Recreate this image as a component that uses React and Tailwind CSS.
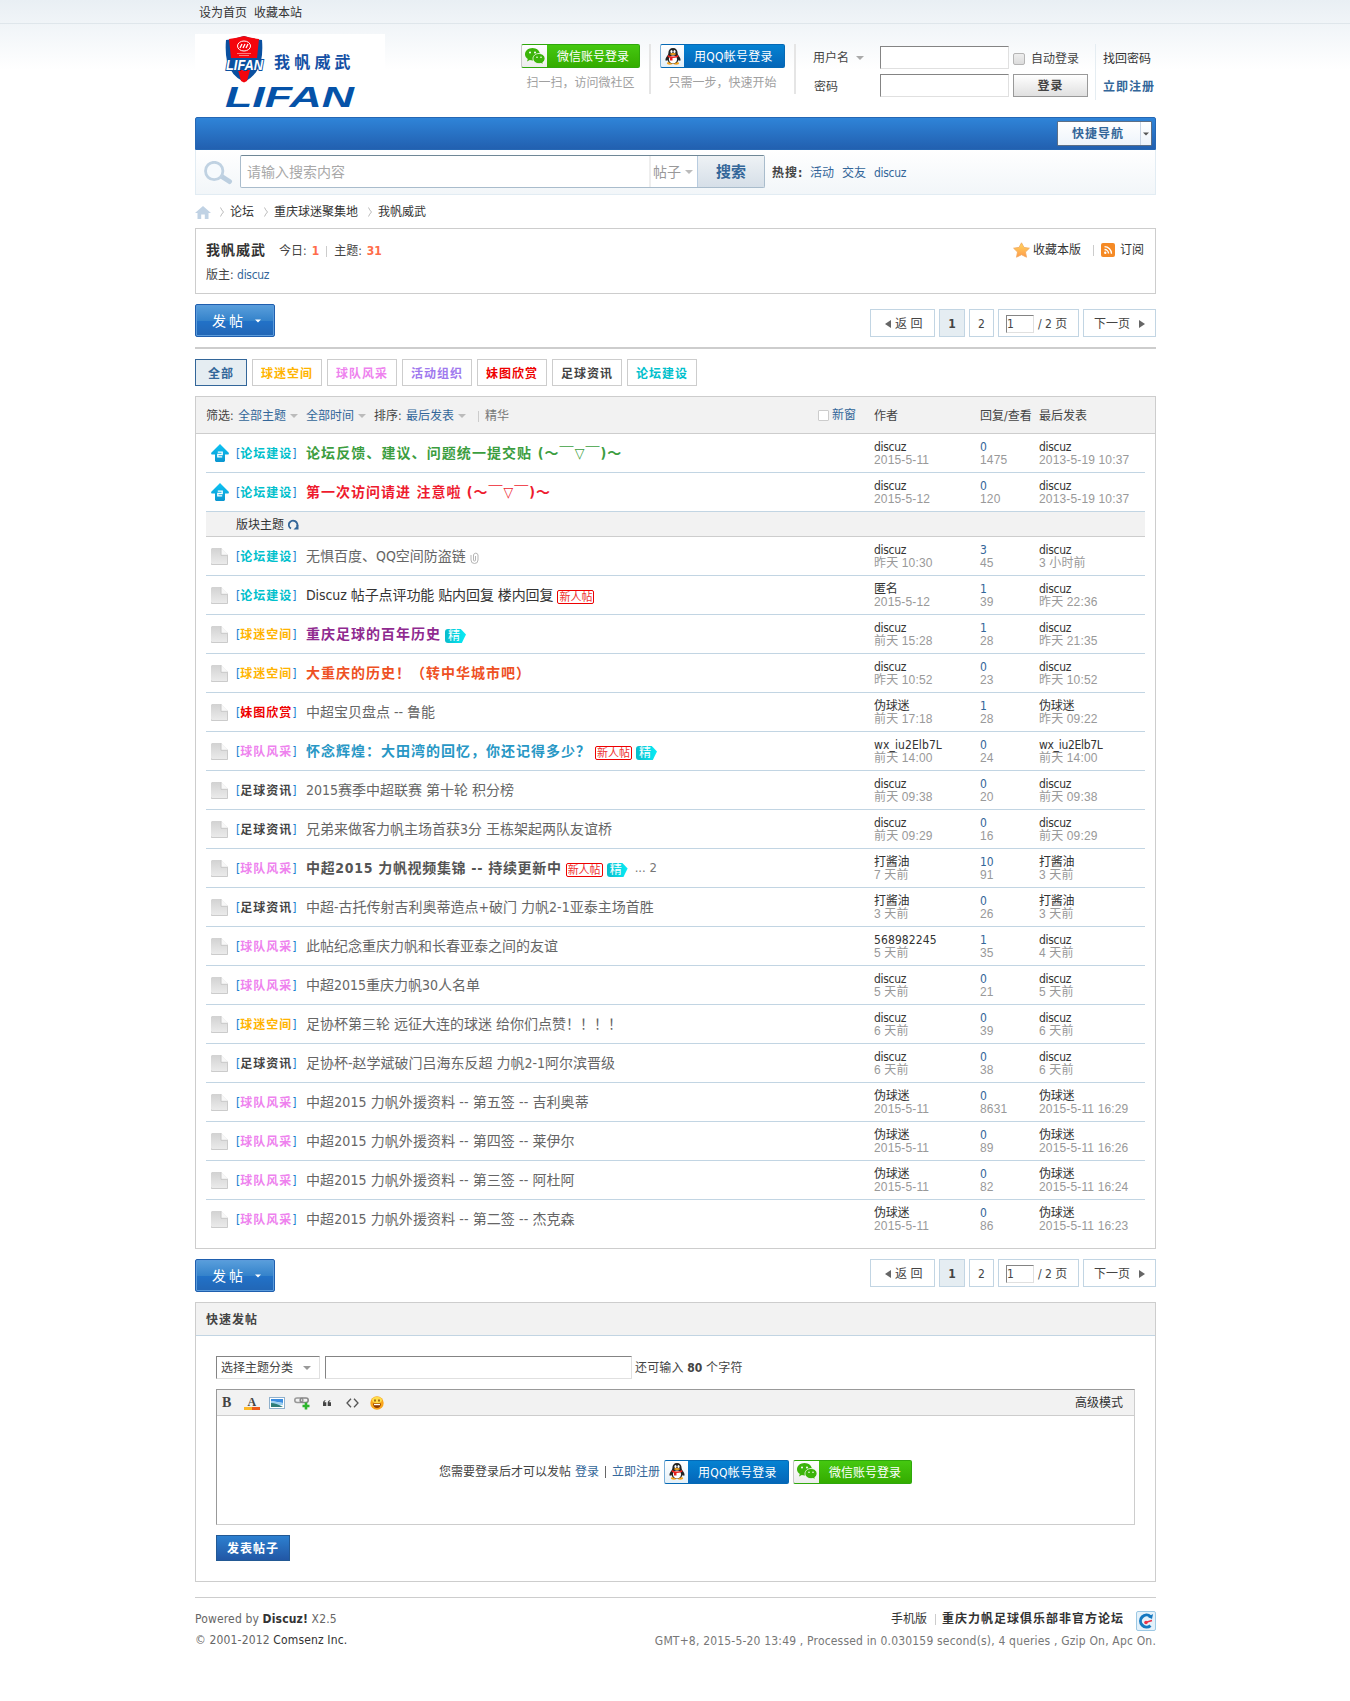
const CN = "font-['DejaVu_Sans_Condensed','Noto_Sans_CJK_SC',sans-serif]";

const CATS = {
  build: ['论坛建设', 'text-[#00c0cc]'],
  space: ['球迷空间', 'text-[#ffb400]'],
  team: ['球队风采', 'text-[#ee82ee]'],
  girl: ['妹图欣赏', 'text-[#ee0000]'],
  news: ['足球资讯', 'text-[#444]'],
};

const STICKY = [
  { cat: 'build', title: '论坛反馈、建议、问题统一提交贴 (～￣▽￣)～', cls: 'font-bold tracking-[1.08px] text-[#3c9d40]', who: 'discuz', date: '2015-5-11', re: '0', views: '1475', last: 'discuz', lastDate: '2013-5-19 10:37' },
  { cat: 'build', title: '第一次访问请进 注意啦 (～￣▽￣)～', cls: 'font-bold tracking-[1px] text-[#ee1b2e]', who: 'discuz', date: '2015-5-12', re: '0', views: '120', last: 'discuz', lastDate: '2013-5-19 10:37' },
];

const G = 'text-[#666]';
const THREADS = [
  { cat: 'build', title: '无惧百度、QQ空间防盗链', cls: G, clip: true, who: 'discuz', date: '昨天 10:30', re: '3', views: '45', last: 'discuz', lastDate: '3 小时前' },
  { cat: 'build', title: 'Discuz 帖子点评功能 贴内回复 楼内回复', cls: 'tracking-[-0.08px] text-[#333]', fresh: true, who: '匿名', date: '2015-5-12', re: '1', views: '39', last: 'discuz', lastDate: '昨天 22:36' },
  { cat: 'space', title: '重庆足球的百年历史', cls: 'font-bold tracking-[1px] text-[#8f2a90]', digest: true, who: 'discuz', date: '前天 15:28', re: '1', views: '28', last: 'discuz', lastDate: '昨天 21:35' },
  { cat: 'space', title: '大重庆的历史！（转中华城市吧）', cls: 'font-bold tracking-[1px] text-[#ee5023]', who: 'discuz', date: '昨天 10:52', re: '0', views: '23', last: 'discuz', lastDate: '昨天 10:52' },
  { cat: 'girl', title: '中超宝贝盘点 -- 鲁能', cls: G, who: '伪球迷', date: '前天 17:18', re: '1', views: '28', last: '伪球迷', lastDate: '昨天 09:22' },
  { cat: 'team', title: '怀念辉煌：大田湾的回忆，你还记得多少？', cls: 'font-bold tracking-[1px] text-[#2897c5]', fresh: true, digest: true, who: 'wx_iu2Elb7L', date: '前天 14:00', re: '0', views: '24', last: 'wx_iu2Elb7L', lastDate: '前天 14:00' },
  { cat: 'news', title: '2015赛季中超联赛 第十轮 积分榜', cls: G, who: 'discuz', date: '前天 09:38', re: '0', views: '20', last: 'discuz', lastDate: '前天 09:38' },
  { cat: 'news', title: '兄弟来做客力帆主场首获3分 王栋架起两队友谊桥', cls: G, who: 'discuz', date: '前天 09:29', re: '0', views: '16', last: 'discuz', lastDate: '前天 09:29' },
  { cat: 'team', title: '中超2015 力帆视频集锦 -- 持续更新中', cls: 'font-bold tracking-[0.68px] text-[#555]', fresh: true, digest: true, pages: true, who: '打酱油', date: '7 天前', re: '10', views: '91', last: '打酱油', lastDate: '3 天前' },
  { cat: 'news', title: '中超-古托传射吉利奥蒂造点+破门 力帆2-1亚泰主场首胜', cls: G, who: '打酱油', date: '3 天前', re: '0', views: '26', last: '打酱油', lastDate: '3 天前' },
  { cat: 'team', title: '此帖纪念重庆力帆和长春亚泰之间的友谊', cls: G, who: '568982245', date: '5 天前', re: '1', views: '35', last: 'discuz', lastDate: '4 天前' },
  { cat: 'team', title: '中超2015重庆力帆30人名单', cls: G, who: 'discuz', date: '5 天前', re: '0', views: '21', last: 'discuz', lastDate: '5 天前' },
  { cat: 'space', title: '足协杯第三轮 远征大连的球迷 给你们点赞！！！！', cls: G, who: 'discuz', date: '6 天前', re: '0', views: '39', last: 'discuz', lastDate: '6 天前' },
  { cat: 'news', title: '足协杯-赵学斌破门吕海东反超 力帆2-1阿尔滨晋级', cls: G, who: 'discuz', date: '6 天前', re: '0', views: '38', last: 'discuz', lastDate: '6 天前' },
  { cat: 'team', title: '中超2015 力帆外援资料 -- 第五签 -- 吉利奥蒂', cls: 'tracking-[0.09px] text-[#666]', who: '伪球迷', date: '2015-5-11', re: '0', views: '8631', last: '伪球迷', lastDate: '2015-5-11 16:29' },
  { cat: 'team', title: '中超2015 力帆外援资料 -- 第四签 -- 莱伊尔', cls: 'tracking-[0.09px] text-[#666]', who: '伪球迷', date: '2015-5-11', re: '0', views: '89', last: '伪球迷', lastDate: '2015-5-11 16:26' },
  { cat: 'team', title: '中超2015 力帆外援资料 -- 第三签 -- 阿杜阿', cls: 'tracking-[0.09px] text-[#666]', who: '伪球迷', date: '2015-5-11', re: '0', views: '82', last: '伪球迷', lastDate: '2015-5-11 16:24' },
  { cat: 'team', title: '中超2015 力帆外援资料 -- 第二签 -- 杰克森', cls: 'tracking-[0.09px] text-[#666]', who: '伪球迷', date: '2015-5-11', re: '0', views: '86', last: '伪球迷', lastDate: '2015-5-11 16:23' },
];

const Caret = ({ className = '' }) => (
  <svg width="8" height="4" viewBox="0 0 8 4" className={`shrink-0 ${className}`}><path d="M0 0h8L4 4z" fill="currentColor" /></svg>
);

const Bar = ({ className = '' }) => <span className={`h-[11px] w-px shrink-0 bg-[#ccc] ${className}`} />;

function Logo() {
  return (
    <div className="mt-[10px] h-[75px] w-[190px] shrink-0 bg-white">
      <svg width="190" height="82" viewBox="0 0 190 82">
        <path d="M31 6Q40 5 49 2Q58 5 67 6Q68 18 66 27Q62 42 49 48Q36 42 32 27Q30 18 31 6z" fill="#0a50a0" />
        <path d="M34 5Q42 4 49 2Q56 4 64 5L62 24H36z" fill="#f4050d" />
        <path d="M43 36h12l-3 11-3 1.500-3-1.500z" fill="#f4050d" />
        <ellipse cx="49" cy="12" rx="6.500" ry="5" fill="none" stroke="#fff" strokeWidth="1" />
        <path d="M45 14l2-4M48 14l2-4M51 14l2-4" stroke="#fff" strokeWidth="1.300" />
        <path d="M42 19.500h14M44 21.500h10" stroke="#f99" strokeWidth=".8" />
        <text x="31" y="36" textLength="37" lengthAdjust="spacingAndGlyphs" fontFamily="Liberation Sans" fontSize="14.500" fontWeight="700" fontStyle="italic" fill="#fff" stroke="#0a50a0" strokeWidth="2" paintOrder="stroke">LIFAN</text>
        <text x="79" y="34" fontFamily="Noto Sans CJK SC" fontSize="16" fontWeight="700" letterSpacing="4.200" fill="#1450a4">我帆威武</text>
        <text x="30" y="73" textLength="129" lengthAdjust="spacingAndGlyphs" fontFamily="Liberation Sans" fontSize="29" fontWeight="700" fontStyle="italic" fill="#0552a8">LIFAN</text>
      </svg>
    </div>
  );
}

function WechatButton() {
  return (
    <span className="flex h-6 w-[119px] shrink-0 overflow-hidden rounded-[2px] border border-[#2fa80c] border-l-[#c8c8c8] bg-gradient-to-b from-[#45c810] to-[#34ac00]">
      <span className="flex w-[25px] items-center justify-center bg-gradient-to-b from-white to-[#ececec]">
        <svg width="20" height="17" viewBox="0 0 20 17">
          <path d="M7.500 0C3.400 0 0 2.800 0 6.300c0 2 1.100 3.700 2.800 4.800L2 13.500l2.800-1.400c.9.300 1.800.4 2.700.4 4.100 0 7.500-2.800 7.500-6.200S11.600 0 7.500 0z" fill="#3cb40a" />
          <path d="M14 5.500c-3.300 0-6 2.300-6 5.100s2.700 5.100 6 5.100c.7 0 1.400-.1 2-.3l2.300 1.200-.6-2c1.400-.9 2.300-2.400 2.300-4 0-2.800-2.700-5.100-6-5.100z" fill="#3cb40a" stroke="#fff" strokeWidth=".8" />
          <circle cx="5" cy="4.400" r="1" fill="#fff" /><circle cx="10" cy="4.400" r="1" fill="#fff" />
          <circle cx="12" cy="9.200" r=".8" fill="#fff" /><circle cx="16" cy="9.200" r=".8" fill="#fff" />
        </svg>
      </span>
      <span className="flex-1 whitespace-nowrap pl-[10px] text-left leading-[24px] text-white">微信账号登录</span>
    </span>
  );
}

function QQButton() {
  return (
    <span className="flex h-6 w-[125px] shrink-0 overflow-hidden rounded-[2px] border border-[#0569b5] border-l-[#7db0d8] bg-gradient-to-b from-[#0582d2] to-[#0566b8]">
      <span className="flex w-[23px] items-center justify-center bg-gradient-to-b from-white to-[#e4f0f8]">
        <svg width="16" height="17" viewBox="0 0 16 17">
          <ellipse cx="4.800" cy="15.300" rx="3" ry="1.400" fill="#f5a21b" /><ellipse cx="11.200" cy="15.300" rx="3" ry="1.400" fill="#f5a21b" />
          <path d="M8 0C5 0 3.400 2 3.400 5c0 1-.3 1.700-.9 2.600C1.300 9.200 0 11 .6 12.600c.4.700 1.200-.1 1.600-.8C2.900 14 5 15.500 8 15.500s5.100-1.500 5.800-3.700c.4.700 1.200 1.500 1.600.8.600-1.600-.7-3.400-1.900-5-.6-.9-.9-1.600-.9-2.600C12.600 2 11 0 8 0z" fill="#222" />
          <ellipse cx="8" cy="11.300" rx="4" ry="3.900" fill="#fff" />
          <ellipse cx="6.500" cy="3.500" rx="1.100" ry="1.500" fill="#fff" /><ellipse cx="9.500" cy="3.500" rx="1.100" ry="1.500" fill="#fff" />
          <ellipse cx="8" cy="5.900" rx="3" ry="1" fill="#f5a21b" />
          <path d="M3 7q5 3 10 0l.5 1.800Q10 10 7.500 10v2.500H5V9.700Q3.500 9.300 2.600 8.800z" fill="#e8201c" />
        </svg>
      </span>
      <span className="flex-1 whitespace-nowrap pl-[10px] text-left leading-[24px] tracking-[0.25px] text-white">用QQ帐号登录</span>
    </span>
  );
}

const INSET = 'border border-[#e0e0e0] border-t-[#848484] border-l-[#848484] bg-white';

function Header() {
  return (
    <header className="flex h-[93px]">
      <Logo />
      <div className="ml-[136px] mt-5 w-[119px] text-center">
        <WechatButton />
        <p className="mt-[6px] leading-[18px] text-[#a0a0a0]">扫一扫，访问微社区</p>
      </div>
      <div className="ml-[9px] mt-5 h-[50px] w-[2px] bg-[#e5e5e5]" />
      <div className="ml-[9px] mt-5 w-[125px] text-center">
        <QQButton />
        <p className="mt-[6px] leading-[18px] text-[#a0a0a0]">只需一步，快速开始</p>
      </div>
      <div className="ml-[9px] mt-5 h-[50px] w-[2px] bg-[#e5e5e5]" />
      <div className="ml-[17px] mt-[22px] flex flex-col gap-[5px]">
        <div className="flex h-[23px] items-center">
          <span className="flex w-[67px] items-center">用户名<Caret className="ml-[7px] text-[#aaa]" /></span>
          <span className={`h-[23px] w-[129px] ${INSET}`} />
          <span className="ml-[4px] mt-[3px] h-3 w-3 rounded-[2px] border border-[#b5b5b5] bg-gradient-to-b from-[#eee] to-[#dcdcdc]" />
          <span className="ml-[6px] mt-[2px]">自动登录</span>
        </div>
        <div className="flex h-[23px] items-center">
          <span className="w-[67px] pl-px pt-[3px]">密码</span>
          <span className={`h-[23px] w-[129px] ${INSET}`} />
          <span className="ml-[4px] h-[23px] w-[75px] border border-[#999] bg-gradient-to-b from-white to-[#e0e0e0] text-center text-[12px] font-bold leading-[23px] tracking-[1px]">登录</span>
        </div>
      </div>
      <div className="ml-[7px] mt-5 h-[56px] w-px bg-[#e5edf2]" />
      <div className="ml-[7px] mt-[26px] flex flex-col gap-[10px] leading-[18px]">
        <span className="text-[#333]">找回密码</span>
        <span className="whitespace-nowrap font-bold tracking-[1px] text-[#369]">立即注册</span>
      </div>
    </header>
  );
}

function SearchBar() {
  return (
    <div className="flex h-[45px] border border-t-0 border-[#e2ecf3] bg-gradient-to-b from-white to-[#f2f6f9]">
      <svg width="31" height="24" viewBox="0 0 31 24" className="ml-[7px] mt-[11px] shrink-0">
        <path d="M19.500 16l7 4.500" stroke="#bccfe0" strokeWidth="5" strokeLinecap="round" />
        <circle cx="11.200" cy="10" r="8.700" fill="#f6fafd" stroke="#c0d2e2" strokeWidth="2.800" />
      </svg>
      <div className="ml-[6px] mt-[5px] flex h-[33px] w-[525px] items-center rounded-[2px] border border-[#a9bccc] border-t-[#6f8796] bg-white">
        <span className="w-[408px] pl-[6px] pt-px text-[14px] text-[#a8a8a8]">请输入搜索内容</span>
        <span className="flex h-full flex-1 items-center border-l-2 border-[#eee] pl-[2px] text-[14px] text-[#999]">帖子<Caret className="ml-[4px] text-[#bbb]" /></span>
        <span className="h-full w-[67px] border-l border-[#b8cce0] bg-gradient-to-b from-[#eef2f5] to-[#d6dfe8] text-center text-[15px] font-bold leading-[33px] text-[#369]">搜索</span>
      </div>
      <div className="ml-[7px] flex h-[45px] items-center">
        <b className="w-[38px] tracking-[1px]">热搜:</b>
        <span className="flex gap-[8px] text-[#369]"><span>活动</span><span>交友</span><span className="tracking-[-0.3px]">discuz</span></span>
      </div>
    </div>
  );
}

const Chevron = ({ className }) => (
  <svg width="4" height="10" viewBox="0 0 4 10" className={`shrink-0 ${className}`}><path d="M.5.500Q1.500 3 3.500 5Q1.500 7 .5 9.500" fill="none" stroke="#bbb" /></svg>
);

function Breadcrumb() {
  return (
    <nav className="flex h-[33px] items-center text-[#333]">
      <svg width="16" height="13" viewBox="0 0 16 13" className="mt-px"><path d="M8 0l8 7h-2.500v6H9.800V8.500H6.200V13H2.500V7H0z" fill="#c0d2e4" /></svg>
      <Chevron className="ml-[9px] mr-[6px]" />论坛
      <Chevron className="ml-[10px] mr-[6px]" />重庆球迷聚集地
      <Chevron className="ml-[10px] mr-[6px]" />我帆威武
    </nav>
  );
}

function ForumInfo() {
  return (
    <section className="h-[66px] border border-[#cdcdcd] px-[10px] pt-[12px]">
      <div className="flex h-[20px] items-center">
        <h1 className="mb-[2px] w-[73px] whitespace-nowrap text-[14px] font-bold tracking-[1px] text-[#333]">我帆威武</h1>
        <span>今日:</span><b className="ml-[5px] text-[#ff6c4a]">1</b>
        <Bar className="ml-[7px] mr-[7px]" />
        <span>主题:</span><b className="ml-[5px] text-[#ff6c4a]">31</b>
        <span className="mb-[2px] mr-px ml-auto flex items-center text-[#333]">
          <svg width="17" height="16" viewBox="0 0 17 16">
            <defs><linearGradient id="star" x2="0" y2="1"><stop stopColor="#ffd75e" /><stop offset="1" stopColor="#ff9a4a" /></linearGradient></defs>
            <path d="M8.500.8l2.500 4.600 5.400.8-3.900 3.800 1 5.200-5-2.500-5 2.500 1-5.200L.6 6.200 6 5.400z" fill="url(#star)" stroke="#f0a860" strokeWidth=".8" />
          </svg>
          <span className="ml-[3px]">收藏本版</span>
          <Bar className="ml-[12px] mr-[7px]" />
          <svg width="14" height="14" viewBox="0 0 14 14"><rect width="14" height="14" rx="2" fill="#f58a25" /><circle cx="4.300" cy="9.800" r="1.200" fill="#fff" /><path d="M3.500 6.500a4 4 0 0 1 4 4M3.500 3.700a7 7 0 0 1 7 7" fill="none" stroke="#fff" strokeWidth="1.300" /></svg>
          <span className="ml-[5px]">订阅</span>
        </span>
      </div>
      <p className="mt-[4px] leading-[20px]">版主: <span className="tracking-[-0.3px] text-[#369]">discuz</span></p>
    </section>
  );
}

function PostButton() {
  return (
    <span className="flex h-[33px] w-[80px] items-center rounded-[2px] border border-[#1f5fae] bg-[linear-gradient(#5a9fdc,#3583cb_50%,#2272c8_51%,#2266b5)] pl-[16px] text-[14px] tracking-[3px] text-white shadow-[inset_0_0_0_1px_#5b9bdb]">
      发帖<Caret className="ml-[9px] w-[6px]" />
    </span>
  );
}

const PG = 'flex h-[28px] items-center border border-[#c2d5e3] pt-px';

function PostRow({ className = '' }) {
  return (
    <div className={`flex justify-between ${className}`}>
      <PostButton />
      <div className="flex gap-[4px] text-[#444]">
        <span className={`${PG} w-[65px] pl-[14px]`}>
          <svg width="6" height="8" viewBox="0 0 6 8" className="mr-[4px]"><path d="M6 0v8L0 4z" fill="#666" /></svg>返 回
        </span>
        <b className={`${PG} w-[26px] justify-center bg-[#e5edf2]`}>1</b>
        <span className={`${PG} w-[25px] justify-center`}>2</span>
        <span className={`${PG} w-[81px] pl-[7px]`}>
          <span className={`mr-[4px] h-[18px] w-[28px] leading-[17px] ${INSET}`}>1</span>/ 2 页
        </span>
        <span className={`${PG} w-[73px] pl-[10px]`}>
          下一页<svg width="6" height="8" viewBox="0 0 6 8" className="ml-[9px]"><path d="M0 0v8l6-4z" fill="#666" /></svg>
        </span>
      </div>
    </div>
  );
}

const TABS = [
  ['球迷空间', 'text-[#ffb400]'], ['球队风采', 'text-[#ee82ee]'], ['活动组织', 'text-[#9f79ee]'],
  ['妹图欣赏', 'text-[#ee0000]'], ['足球资讯', 'text-[#444]'], ['论坛建设', 'text-[#00c0cc]'],
];

function TypeTabs() {
  return (
    <div className="mt-[10px] flex gap-[5px] font-bold leading-[28px] tracking-[1px]">
      <span className="h-[27px] w-[52px] border border-[#369] bg-[#e5edf2] pl-[12px] text-[#369]">全部</span>
      {TABS.map(([t, c]) => (
        <span key={t} className={`h-[27px] w-[70px] whitespace-nowrap border border-[#cdcdcd] pl-[8px] ${c}`}>{t}</span>
      ))}
    </div>
  );
}

const Filter = ({ children }) => (
  <span className="flex items-center text-[#369]">{children}<Caret className="mb-px ml-[4px] text-[#bbb]" /></span>
);

function PinIcon() {
  return (
    <svg width="18" height="18" viewBox="0 0 18 18" className="ml-[5px]">
      <defs><linearGradient id="pin" x2="0" y2="1"><stop stopColor="#0cc4f4" /><stop offset="1" stopColor="#0a96d0" /></linearGradient></defs>
      <path d="M9 0l9 9-.5 1.500H14V17l-1 1H5l-1-1v-6.500H.5L0 9z" fill="url(#pin)" />
      <path d="M6.800 8.200h4.400v2.300H6.800v2.300h4.400" fill="none" stroke="#fff" strokeWidth="1.300" />
    </svg>
  );
}

function PageIcon() {
  return (
    <svg width="17" height="17" viewBox="0 0 17 17" className="ml-[5px]">
      <defs><linearGradient id="sheet" x2="0" y2="1"><stop stopColor="#d2d2d2" /><stop offset="1" stopColor="#ececec" /></linearGradient></defs>
      <path d="M1 0h9l7 7v9l-1 1H1l-1-1V1z" fill="url(#sheet)" />
      <path d="M.5 15.500v1h16V8" fill="none" stroke="#cbcbcb" />
      <path d="M10.200 0v7H17z" fill="#f8f8f8" /><path d="M10 0v7.300h7" fill="none" stroke="#c4c4c4" strokeWidth=".8" />
    </svg>
  );
}

const Fresh = () => (
  <span className="h-[14px] w-[37px] overflow-hidden rounded-[2px] border border-[#e00] text-center text-[11px] leading-[13px] text-[#e33]">新人帖</span>
);

const Digest = () => (
  <span className="h-[14px] w-[21px] overflow-hidden rounded-l-[3px] bg-gradient-to-r from-[#08bccb] to-[#08ecf6] pl-[3px] text-[12px] leading-[14px] text-white [clip-path:polygon(0_0,75%_0,100%_40%,80%_100%,0_100%)]">精</span>
);

const ARIAL = "font-['Liberation_Sans','Noto_Sans_CJK_SC',sans-serif] tracking-[0.15px] text-[#999]";
const NAME = 'tracking-[-0.3px] text-[#333]';

function Row({ t, icon, last }) {
  const [name, color] = CATS[t.cat];
  return (
    <div className={`mx-[10px] flex h-[39px] border-b ${last ? 'border-transparent' : 'border-[#c2d5e3]'}`}>
      <div className="flex w-[668px] items-center whitespace-nowrap">
        <span className="w-[30px]">{icon}</span>
        <span className="mt-px flex w-[70px] text-[#1680d0]">[<b className={`tracking-[1px] ${color}`}>{name}</b>]</span>
        <span className={`text-[14px] ${t.cls}`}>{t.title}</span>
        <span className="ml-[4px] mt-[4px] flex gap-[4px]">
          {t.clip && (
            <svg width="9" height="12" viewBox="0 0 9 12"><path d="M1 3v5a3.500 3.500 0 0 0 7 0V3a2.300 2.300 0 0 0-4.500 0v5a1 1 0 0 0 2 0V4" fill="none" stroke="#b5b5b5" /></svg>
          )}
          {t.fresh && <Fresh />}
          {t.digest && <Digest />}
        </span>
        {t.pages && <span className="ml-[7px] text-[13px] text-[#777]">... 2</span>}
      </div>
      <div className="w-[106px] pt-[7px] leading-[13px]"><p className={`${NAME} ${t.who.startsWith('wx') || t.who.startsWith('5') ? 'tracking-[0.1px]' : ''}`}>{t.who}</p><p className={ARIAL}>{t.date}</p></div>
      <div className="w-[59px] pt-[7px] leading-[13px]"><p className="text-[#369]">{t.re}</p><p className={ARIAL}>{t.views}</p></div>
      <div className="whitespace-nowrap pt-[7px] leading-[13px]"><p className={NAME}>{t.last}</p><p className={ARIAL}>{t.lastDate}</p></div>
    </div>
  );
}

function ThreadList() {
  return (
    <section className="mt-[10px] h-[853px] border border-[#cdcdcd]">
      <div className="flex h-[37px] items-center border-b border-[#cdcdcd] bg-[#f2f2f2] px-[10px] pt-[2px]">
        <div className="flex w-[612px] items-center">
          <span className="w-[32px]">筛选:</span><Filter>全部主题</Filter>
          <span className="w-[8px]" /><Filter>全部时间</Filter>
          <span className="ml-[8px] w-[32px]">排序:</span><Filter>最后发表</Filter>
          <Bar className="ml-[12px] mr-[6px]" /><span className="text-[#777]">精华</span>
        </div>
        <span className="mt-[-2px] flex w-[56px] items-center text-[#369]"><span className="mr-[3px] h-[11px] w-[11px] rounded-[1px] border border-[#ccc] bg-white" />新窗</span>
        <span className="w-[106px]">作者</span><span className="w-[59px] whitespace-nowrap">回复/查看</span><span>最后发表</span>
      </div>
      {STICKY.map((t) => <Row key={t.title} t={t} icon={<PinIcon />} />)}
      <div className="mx-[10px] flex h-[25px] items-center border-b border-[#cdcdcd] bg-[#f2f2f2] pl-[30px] pt-px text-[#333]">
        版块主题
        <svg width="11" height="11" viewBox="0 0 11 11" className="mb-px ml-[4px]"><path d="M3 9.500A4.200 4.200 0 1 1 8.800 7.800" fill="none" stroke="#369" strokeWidth="1.900" /><path d="M5.500 10.500h5v-5z" fill="#369" /></svg>
      </div>
      {THREADS.map((t, i) => <Row key={t.title} t={t} icon={<PageIcon />} last={i === THREADS.length - 1} />)}
    </section>
  );
}

function Toolbar() {
  return (
    <div className="flex h-[26px] items-center border-b border-[#cdcdcd] bg-[#f2f2f2] pl-[5px] pr-[11px]">
      <span className="w-[22px] font-['Liberation_Serif',serif] text-[14px] font-bold">B</span>
      <svg width="16" height="14" viewBox="0 0 16 14"><text x="3.500" y="9.500" fontFamily="Liberation Serif" fontWeight="700" fontSize="12" fill="#444">A</text><path d="M0 11h8v3H0z" fill="#fdb827" /><path d="M8 11h8v3H8z" fill="#ee5a1c" /></svg>
      <svg width="16" height="12" viewBox="0 0 16 12" className="ml-[9px]"><rect x=".5" y=".5" width="15" height="11" fill="#fff" stroke="#8fb0cc" /><path d="M2 2h12v4L2 4z" fill="#3b8de0" /><path d="M2 4l12 2v2L2 9z" fill="#9cd0f0" /><path d="M2 6q5 0 12 4H2z" fill="#2d7d78" /></svg>
      <svg width="16" height="13" viewBox="0 0 16 13" className="ml-[9px] mt-[2px]"><rect x=".8" y="1" width="8" height="4.500" rx="2.200" fill="none" stroke="#999" strokeWidth="1.600" /><rect x="6.200" y="1" width="8" height="4.500" rx="2.200" fill="none" stroke="#888" strokeWidth="1.600" /><path d="M12 5.500v7M8.500 9h7" stroke="#2bb52b" strokeWidth="2.600" /></svg>
      <svg width="8" height="6" viewBox="0 0 8 6" className="ml-[13px]"><path d="M3 0Q1.500.8 1.600 2.200H3.300V6H0V2.800Q0 .5 3 0zM7.700 0Q6.200.8 6.300 2.200H8V6H4.700V2.800Q4.700.5 7.700 0z" fill="#444" /></svg>
      <svg width="13" height="10" viewBox="0 0 13 10" className="ml-[15px]"><path d="M5 .7L1 5l4 4.300M8 .7L12 5 8 9.300" fill="none" stroke="#555" strokeWidth="1.300" /></svg>
      <svg width="14" height="14" viewBox="0 0 14 14" className="ml-[11px]"><circle cx="7" cy="7" r="6.700" fill="#f9a51c" /><ellipse cx="7" cy="4" rx="5" ry="3.200" fill="#ffdc4a" /><path d="M5 3.500v2M9 3.500v2" stroke="#7a3c00" strokeWidth="1.400" /><path d="M3 7.500h8q-.5 4.500-4 4.500t-4-4.500z" fill="#8c3a00" /><path d="M4 8h6v1.200H4z" fill="#fff" /></svg>
      <span className="ml-auto pt-px text-[#333]">高级模式</span>
    </div>
  );
}

function QuickPost() {
  return (
    <section className="mt-[10px] h-[280px] border border-[#cdcdcd]">
      <h2 className="h-[33px] border-b border-[#c2d5e3] bg-[#f2f2f2] pl-[10px] font-bold leading-[35px] tracking-[1px]">快速发帖</h2>
      <div className="px-[20px] pt-[20px]">
        <div className="flex h-[23px] items-center">
          <span className={`flex h-[23px] w-[104px] items-center pl-[4px] ${INSET}`}>选择主题分类<Caret className="ml-[10px] text-[#999]" /></span>
          <span className={`ml-[5px] h-[23px] w-[307px] ${INSET}`} />
          <span className="ml-[3px] tracking-[0.15px]">还可输入 <b>80</b> 个字符</span>
        </div>
        <div className="mt-[10px] h-[136px] border border-[#cdcdcd] border-l-[#999] border-t-[#999]">
          <Toolbar />
          <div className="flex h-[108px] items-center justify-center pt-[3px]">
            <span>您需要登录后才可以发帖</span>
            <span className="ml-[4px] text-[#369]">登录</span>
            <span className="mx-[6px] h-[12px] w-px bg-[#666]" />
            <span className="mr-[4px] text-[#369]">立即注册</span>
            <QQButton /><span className="w-[4px]" /><WechatButton />
          </div>
        </div>
        <span className="mt-[10px] block h-[26px] w-[74px] border border-[#235994] bg-gradient-to-b from-[#2d80d0] to-[#2257a5] pl-[10px] font-bold leading-[27px] tracking-[1px] text-white">发表帖子</span>
      </div>
    </section>
  );
}

function Footer() {
  return (
    <footer className="mt-[15px] flex justify-between border-t border-[#cdcdcd] pt-[11px] leading-[21px] text-[#666]">
      <div className="tracking-[0.15px]">
        <p>Powered by <b className="text-[#333]">Discuz!</b> X2.5</p>
        <p>© 2001-2012 <span className="text-[#333]">Comsenz Inc.</span></p>
      </div>
      <div className="flex flex-col items-end">
        <div className="flex h-[21px] items-center text-[#333]">
          手机版<Bar className="ml-[8px] mr-[6px]" /><b className="tracking-[1px]">重庆力帆足球俱乐部非官方论坛</b>
          <svg width="20" height="20" viewBox="0 0 20 20" className="ml-[12px] mt-[2px]"><rect x=".5" y=".5" width="19" height="19" rx="1.500" fill="#e4f1fa" stroke="#9cc8e4" /><path d="M14.500 5.500A6 6 0 1 0 14.500 14.500" fill="none" stroke="#1478c0" strokeWidth="3" /><path d="M12 6l5-3-1 5z" fill="#1478c0" /><path d="M9.500 11.500L16 9.500" stroke="#e8344a" strokeWidth="1.500" /><circle cx="10" cy="11.500" r="1.800" fill="#e8344a" /></svg>
        </div>
        <p className="pt-px tracking-[0.18px] text-[#777]">GMT+8, 2015-5-20 13:49 , Processed in 0.030159 second(s), 4 queries , Gzip On, Apc On.</p>
      </div>
    </footer>
  );
}

export default function App() {
  return (
    <div className={`h-[1701px] overflow-hidden bg-white bg-[linear-gradient(#e9eff4,#ffffff_70px)] text-[12px] leading-[18px] text-[#444] ${CN}`}>
      <div className="h-6 border-b border-[#dfe6eb]">
        <div className="ml-[199px] flex h-[26px] items-center gap-[7px] text-[#333]"><span>设为首页</span><span>收藏本站</span></div>
      </div>
      <div className="ml-[195px] w-[961px]">
        <Header />
        <div className="flex h-[33px] items-start justify-end rounded-t-[2px] border border-[#2567b4] bg-gradient-to-b from-[#2f84d8] to-[#2260b0] pr-[3px] pt-[3px]">
          <span className="flex h-[25px] w-[95px] items-center rounded-[1px] border border-[#5d6f86] bg-gradient-to-b from-white to-[#eef4fb] pl-[14px] font-bold tracking-[1px] text-[#369]">
            <span className="w-[68px] whitespace-nowrap pt-px">快捷导航</span>
            <span className="flex h-full flex-1 items-center justify-center border-l border-[#c8d4e4]"><Caret className="w-[6px] text-[#555]" /></span>
          </span>
        </div>
        <SearchBar />
        <Breadcrumb />
        <ForumInfo />
        <PostRow className="mt-[10px] items-end" />
        <div className="mt-[10px] h-[2px] bg-[#cdcdcd]" />
        <TypeTabs />
        <ThreadList />
        <PostRow className="mt-[10px] items-start" />
        <QuickPost />
        <Footer />
      </div>
    </div>
  );
}
